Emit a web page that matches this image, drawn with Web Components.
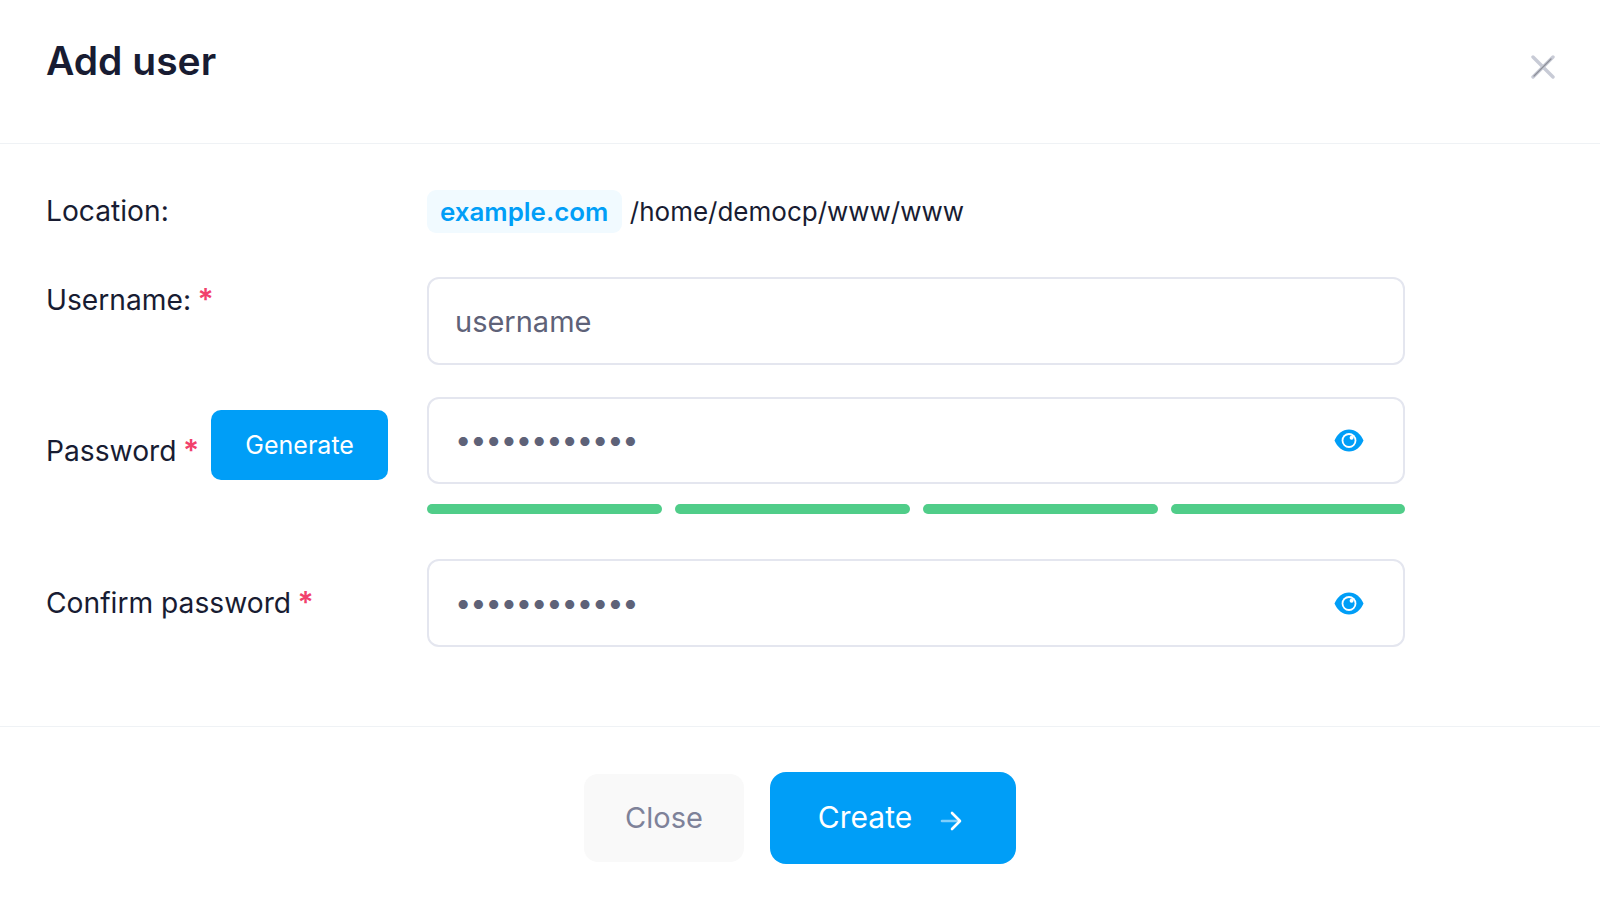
<!DOCTYPE html>
<html>
<head>
<meta charset="utf-8">
<title>Add user</title>
<style>
  html, body { margin: 0; padding: 0; height: 100%; background: #fff; }
  body { font-family: Inter, "Liberation Sans", sans-serif; color: #181c32; }
</style>
</head>
<body>
<add-user-modal>
  <span slot="title">Add user</span>

  <form-row label="Location:" style="margin-bottom:44px">
    <domain-chip>example.com</domain-chip>
    <span style="font-size:26px; color:#181c32; margin-left:8px; line-height:43px; margin-top:1px">/home/democp/www/www</span>
  </form-row>

  <form-row label="Username:" required style="margin-bottom:32px">
    <text-field placeholder>username</text-field>
  </form-row>

  <form-row label="Password" required action="Generate" style="margin-bottom:45px">
    <text-field secret style="height:87px">••••••••••••</text-field>
    <strength-meter></strength-meter>
  </form-row>

  <form-row label="Confirm password" required>
    <text-field secret>••••••••••••</text-field>
  </form-row>

  <app-button slot="footer" variant="light">Close</app-button>
  <app-button slot="footer" variant="primary" arrow>Create</app-button>
</add-user-modal>

<script>
class AddUserModal extends HTMLElement {
    constructor(){
        super();
        this.shadowDOM = this.attachShadow({mode: "open"});
        this.shadowDOM.innerHTML = `
        <style>
        :host { display: flex; flex-direction: column; height: 904px; background: #fff; box-sizing: border-box; }
        header {
            height: 144px; box-sizing: border-box; flex: none;
            border-bottom: 1.5px solid #eff2f5;
            padding: 34px 45px 0 46px; display: flex; justify-content: space-between;
        }
        h1 { margin: 0; font-size: 39px; line-height: 54px; font-weight: 600; color: #181c32; }
        .close { width: 24px; height: 24px; margin: 21px 0 0; display: block; }
        main { flex: none; height: 582px; box-sizing: border-box; padding: 45px 46px 0; }
        footer {
            flex: 1; border-top: 1.5px solid #eff2f5; box-sizing: border-box;
            display: flex; justify-content: center; align-items: flex-start; gap: 26px; padding-top: 45px;
        }
        </style>
        <header>
            <h1><slot name="title"></slot></h1>
            <svg class="close" viewBox="0 0 24 24" fill="none" stroke-linecap="round">
                <path d="M2 2 22 22" stroke="#c8cbd6" stroke-width="3.400"/>
                <path d="M22 2 2 22" stroke="#c8cbd6" stroke-width="3.400"/>
                <path d="M20 4 3 21" stroke="#8e9098" stroke-width="1.300"/>
            </svg>
        </header>
        <main><slot></slot></main>
        <footer><slot name="footer"></slot></footer>`;
    }
}

class FormRow extends HTMLElement {
    constructor(){
        super();
        this.shadowDOM = this.attachShadow({mode: "open"});
    }

    connectedCallback(){
        const star = this.hasAttribute("required") ? `<span class="star">*</span>` : "";
        const action = this.getAttribute("action");
        this.shadowDOM.innerHTML = `
        <style>
        :host { display: grid; grid-template-columns: 381px 978px; align-items: start; }
        .label {
            display: flex; align-items: center; margin-top: 1px;
            font-size: 28.200px; font-weight: 400; line-height: 42px; color: #181c32; min-height: 42px;
        }
        .star { color: #f1416c; margin-left: 6.500px; font-size: 30px; font-weight: 600; }
        .text { white-space: nowrap; }
        .value { display: flex; flex-wrap: wrap; align-items: center; }
        .value.stack { display: block; }
        </style>
        <div class="label" id="label"><span class="text">${this.getAttribute("label")}${star}</span></div>
        <div class="value" id="value"><slot></slot></div>`;
        const label = this.shadowDOM.getElementById("label");
        const value = this.shadowDOM.getElementById("value");
        if (action) {
            const btn = document.createElement("app-button");
            btn.setAttribute("variant", "small");
            btn.textContent = action;
            label.appendChild(btn);
            label.style.marginTop = "13px";
            label.style.gap = "12px";
            this.shadowDOM.querySelector(".text").style.marginTop = "11px";
        }
        if (this.querySelector("text-field")) value.classList.add("stack");
        if (this.getAttribute("label") === "Confirm password") label.style.marginTop = "22px";
    }
}

class DomainChip extends HTMLElement {
    constructor(){
        super();
        this.shadowDOM = this.attachShadow({mode: "open"});
        this.shadowDOM.innerHTML = `
        <style>
        :host {
            display: inline-block; background: #f1faff; color: #009ef7; border-radius: 9px;
            font-size: 25.900px; font-weight: 600; line-height: 43px; height: 43px; padding: 0 13.500px 0 13px;
        }
        </style><slot></slot>`;
    }
}

class TextField extends HTMLElement {
    constructor(){
        super();
        this.shadowDOM = this.attachShadow({mode: "open"});
        this.shadowDOM.innerHTML = `
        <style>
        :host {
            display: flex; align-items: center; justify-content: space-between; box-sizing: border-box;
            width: 978px; height: 88px; border: 2px solid #e4e6ef; border-radius: 12px; background: #fff;
            padding: 0 39px 0 26px; color: #5e6278; font-size: 29px;
        }
        :host([secret]) { letter-spacing: -1.100px; font-size: 29px; padding-left: 26px; }
        :host([secret]) span { margin-top: -2px; }
        svg { width: 30px; height: 23px; display: none; flex: none; }
        :host([secret]) svg { display: block; }
        </style>
        <span><slot></slot></span>
        <svg viewBox="0 0 30 23">
            <path fill="#009ef7" d="M15 .5C8.500.5 3.200 5 .5 11.500 3.200 18 8.500 22.500 15 22.500S26.800 18 29.500 11.500C26.800 5 21.500.5 15 .5Z"/>
            <circle cx="15" cy="11.500" r="7.400" fill="#fff"/>
            <circle cx="15" cy="11.500" r="5.600" fill="#009ef7"/>
            <circle cx="17.600" cy="8.800" r="2" fill="#fff"/>
        </svg>`;
    }
}

class StrengthMeter extends HTMLElement {
    constructor(){
        super();
        this.shadowDOM = this.attachShadow({mode: "open"});
        this.shadowDOM.innerHTML = `
        <style>
        :host { display: grid; grid-template-columns: 235px 235px 235px 1fr; gap: 13px; margin-top: 20px; width: 978px; }
        i { display: block; height: 10px; border-radius: 5px; background: #50cd89; }
        </style><i></i><i></i><i></i><i></i>`;
    }
}

class AppButton extends HTMLElement {
    constructor(){
        super();
        this.shadowDOM = this.attachShadow({mode: "open"});
        this.shadowDOM.innerHTML = `
        <style>
        :host { display: inline-flex; align-items: center; justify-content: center; box-sizing: border-box; flex: none; white-space: nowrap; }
        span { margin-top: -2px; }
        :host([variant="primary"]) {
            width: 246px; height: 92px; border-radius: 16px; background: #009ef7; color: #fff; font-size: 30px; font-weight: 400; gap: 28px; padding-right: 6px;
        }
        :host([variant="light"]) {
            width: 160px; height: 88px; margin-top: 2px; border-radius: 14px; background: #f9f9f9; color: #7e8299; font-size: 29px; font-weight: 400;
        }
        :host([variant="small"]) {
            width: 177px; height: 70px; border-radius: 10px; background: #009ef7; color: #fff; font-size: 25px; font-weight: 400;
        }
        :host([variant="small"]) span { margin-top: 0; }
        svg { width: 22px; height: 20px; margin-top: 5px; }
        </style><span><slot></slot></span>`;
        if (this.hasAttribute("arrow")) {
            this.shadowDOM.innerHTML += `
            <svg viewBox="0 0 22 20" fill="none" stroke-width="2.600" stroke-linecap="round" stroke-linejoin="round">
                <path d="M2 10H19" stroke="#fff" stroke-opacity=".5"/>
                <path d="M12 2 20 10 12 18" stroke="#fff"/>
            </svg>`;
        }
    }
}

if(!customElements.get('add-user-modal')) { customElements.define('add-user-modal', AddUserModal); }
if(!customElements.get('app-button')) { customElements.define('app-button', AppButton); }
if(!customElements.get('form-row')) { customElements.define('form-row', FormRow); }
if(!customElements.get('domain-chip')) { customElements.define('domain-chip', DomainChip); }
if(!customElements.get('text-field')) { customElements.define('text-field', TextField); }
if(!customElements.get('strength-meter')) { customElements.define('strength-meter', StrengthMeter); }
</script>
</body>
</html>
